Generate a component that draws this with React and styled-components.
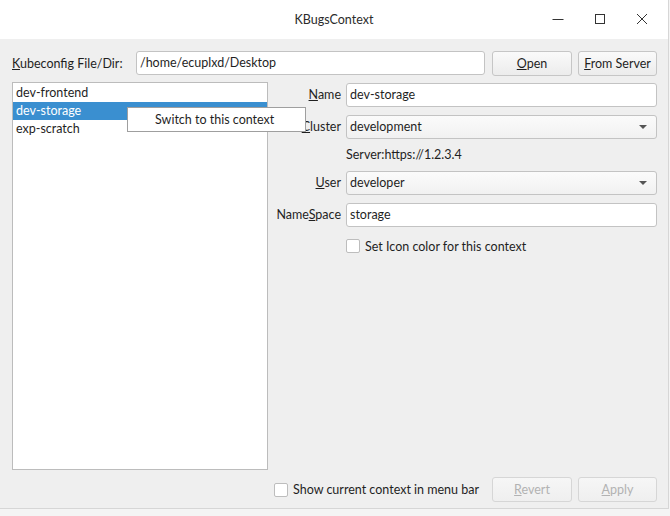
import React, { useState } from 'react';
import styled, { createGlobalStyle } from 'styled-components';

const GlobalStyle = createGlobalStyle`
  html, body {
    margin: 0;
    padding: 0;
    background: #f4f4f4;
  }
  body {
    font-family: Lato, "Noto Sans", sans-serif;
    font-size: 12.5px;
    color: #1f1f1f;
  }
`;

const contexts = ['dev-frontend', 'dev-storage', 'exp-scratch'];

function Mn({ children, rest }) {
  return (
    <>
      <u>{children}</u>
      {rest}
    </>
  );
}

function App() {
  const [selected, setSelected] = useState('dev-storage');
  const [showInBar, setShowInBar] = useState(false);
  const [iconColor, setIconColor] = useState(false);

  return (
    <Desktop>
      <GlobalStyle />
      <Window>
        <TitleBar>
          <Title>KBugsContext</Title>
          <Controls>
            <CtrlButton aria-label="minimize">
              <svg width="12" height="12" viewBox="0 0 12 12">
                <path d="M0.5 6.5h11" stroke="#333" strokeWidth="1" />
              </svg>
            </CtrlButton>
            <CtrlButton aria-label="maximize">
              <svg width="12" height="12" viewBox="0 0 12 12">
                <rect x="1.5" y="1.5" width="9" height="9" fill="none" stroke="#333" strokeWidth="1" />
              </svg>
            </CtrlButton>
            <CtrlButton aria-label="close">
              <svg width="12" height="12" viewBox="0 0 12 12">
                <path d="M1 1L11 11M11 1L1 11" stroke="#333" strokeWidth="1" />
              </svg>
            </CtrlButton>
          </Controls>
        </TitleBar>

        <Body>
          <TopRow>
            <TopLabel>
              <Mn rest="ubeconfig File/Dir:">K</Mn>
            </TopLabel>
            <TextInput defaultValue="/home/ecuplxd/Desktop" />
            <ButtonPair>
              <PushButton>
                <Mn rest="pen">O</Mn>
              </PushButton>
              <PushButton $narrow>
                <Mn rest="rom Server">F</Mn>
              </PushButton>
            </ButtonPair>
          </TopRow>

          <Main>
            <ListBox>
              {contexts.map((c) => (
                <ListItem
                  key={c}
                  $active={c === selected}
                  onClick={() => setSelected(c)}
                >
                  {c}
                </ListItem>
              ))}
              <ContextMenu>
                <MenuItem>Switch to this context</MenuItem>
              </ContextMenu>
            </ListBox>

            <Form>
              <FieldLabel>
                <Mn rest="ame">N</Mn>
              </FieldLabel>
              <TextInput defaultValue="dev-storage" />

              <FieldLabel>
                <Mn rest="luster">C</Mn>
              </FieldLabel>
              <Combo>
                <span>development</span>
                <Arrow />
              </Combo>

              <span />
              <ServerText>Server:https://1.2.3.4</ServerText>

              <FieldLabel>
                <Mn rest="ser">U</Mn>
              </FieldLabel>
              <Combo>
                <span>developer</span>
                <Arrow />
              </Combo>

              <FieldLabel>
                Name<Mn rest="pace">S</Mn>
              </FieldLabel>
              <TextInput defaultValue="storage" />

              <span />
              <CheckRow onClick={() => setIconColor(!iconColor)}>
                <CheckBox $checked={iconColor} />
                Set Icon color for this context
              </CheckRow>
            </Form>
          </Main>

          <BottomRow>
            <CheckRow onClick={() => setShowInBar(!showInBar)}>
              <CheckBox $checked={showInBar} />
              Show current context in menu bar
            </CheckRow>
            <ButtonPair>
              <PushButton disabled>
                <Mn rest="evert">R</Mn>
              </PushButton>
              <PushButton $narrow disabled>
                <Mn rest="pply">A</Mn>
              </PushButton>
            </ButtonPair>
          </BottomRow>
        </Body>
      </Window>
    </Desktop>
  );
}

const Desktop = styled.div`
  width: 670px;
  height: 516px;
  overflow: hidden;
  background: #f4f4f4;
`;

const Window = styled.div`
  width: 668px;
  height: 508px;
  display: flex;
  flex-direction: column;
  background: #efefef;
  box-shadow: 0 0 0 1px #d6d6d6;
`;

const TitleBar = styled.div`
  height: 39px;
  flex: none;
  background: #ffffff;
  position: relative;
  display: flex;
  align-items: center;
  justify-content: center;
`;

const Title = styled.div`
  font-size: 12.5px;
  color: #2b2b2b;
  margin-top: -1px;
`;

const Controls = styled.div`
  position: absolute;
  right: 5px;
  top: 0;
  height: 37px;
  display: flex;
  align-items: center;
`;

const CtrlButton = styled.div`
  width: 42px;
  height: 37px;
  display: flex;
  align-items: center;
  justify-content: center;
`;

const Body = styled.div`
  flex: 1;
  display: flex;
  flex-direction: column;
  padding: 12px 11px 6px 12px;
  gap: 7px;
  min-height: 0;
`;

const TopRow = styled.div`
  display: flex;
  align-items: center;
  height: 24px;
  gap: 7px;
`;

const TopLabel = styled.label`
  width: 117px;
  flex: none;
  white-space: nowrap;
`;

const ButtonPair = styled.div`
  display: flex;
  gap: 6px;
  flex: none;
`;

const TextInput = styled.input`
  flex: 1;
  min-width: 0;
  height: 24px;
  box-sizing: border-box;
  border: 1px solid #c3c3c3;
  border-radius: 3px;
  background: #ffffff;
  padding: 0 3px 1px;
  font: inherit;
  color: #1f1f1f;
  outline: none;
`;

const PushButton = styled.button`
  width: ${(p) => (p.$narrow ? '79px' : '80px')};
  height: 25px;
  box-sizing: border-box;
  border: 1px solid #c6c6c6;
  border-radius: 3px;
  background: linear-gradient(#fafafa, #ececec);
  font: inherit;
  color: #1f1f1f;
  padding: 0;

  &:disabled {
    color: #b2b2b2;
    background: linear-gradient(#f6f6f6, #efefef);
    border-color: #d6d6d6;
  }
`;

const Main = styled.div`
  flex: 1;
  min-height: 0;
  display: flex;
  gap: 7px;
`;

const ListBox = styled.div`
  position: relative;
  width: 256px;
  flex: none;
  box-sizing: border-box;
  border: 1px solid #bcbcbc;
  background: #ffffff;
  padding: 1px 0;
`;

const ListItem = styled.div`
  height: 18px;
  line-height: 18px;
  padding: 0 3px;
  background: ${(p) => (p.$active ? '#3a8fd0' : 'transparent')};
  color: ${(p) => (p.$active ? '#ffffff' : '#1f1f1f')};
  cursor: default;
`;

const ContextMenu = styled.div`
  position: absolute;
  left: 114px;
  top: 24px;
  width: 179px;
  height: 25px;
  box-sizing: border-box;
  background: #ffffff;
  border: 1px solid #9f9f9f;
  z-index: 2;
  display: flex;
  align-items: center;
`;

const MenuItem = styled.div`
  padding-left: 27px;
  white-space: nowrap;
`;

const Form = styled.div`
  flex: 1;
  display: grid;
  grid-template-columns: 66px 1fr;
  column-gap: 5px;
  row-gap: 8px;
  align-content: start;
  align-items: center;
  padding-top: 1px;
`;

const FieldLabel = styled.label`
  text-align: right;
  white-space: nowrap;
  height: 24px;
  line-height: 24px;
`;

const Combo = styled.div`
  height: 24px;
  box-sizing: border-box;
  border: 1px solid #c3c3c3;
  border-radius: 3px;
  background: linear-gradient(#fbfbfb, #f1f1f1);
  padding: 0 9px 1px 3px;
  display: flex;
  align-items: center;
  justify-content: space-between;
`;

const Arrow = styled.span`
  width: 0;
  height: 0;
  border-left: 4px solid transparent;
  border-right: 4px solid transparent;
  border-top: 4px solid #555555;
`;

const ServerText = styled.div`
  height: 16px;
  line-height: 16px;
`;

const CheckRow = styled.div`
  display: flex;
  align-items: center;
  gap: 5px;
  height: 22px;
  white-space: nowrap;
  cursor: default;
`;

const CheckBox = styled.span`
  width: 14px;
  height: 14px;
  box-sizing: border-box;
  border: 1px solid #bdbdbd;
  border-radius: 2px;
  background: ${(p) => (p.$checked ? '#3a8fd0' : '#ffffff')};
`;

const BottomRow = styled.div`
  display: flex;
  align-items: center;
  justify-content: space-between;
  height: 25px;
  padding-left: 262px;
`;

export default App;
